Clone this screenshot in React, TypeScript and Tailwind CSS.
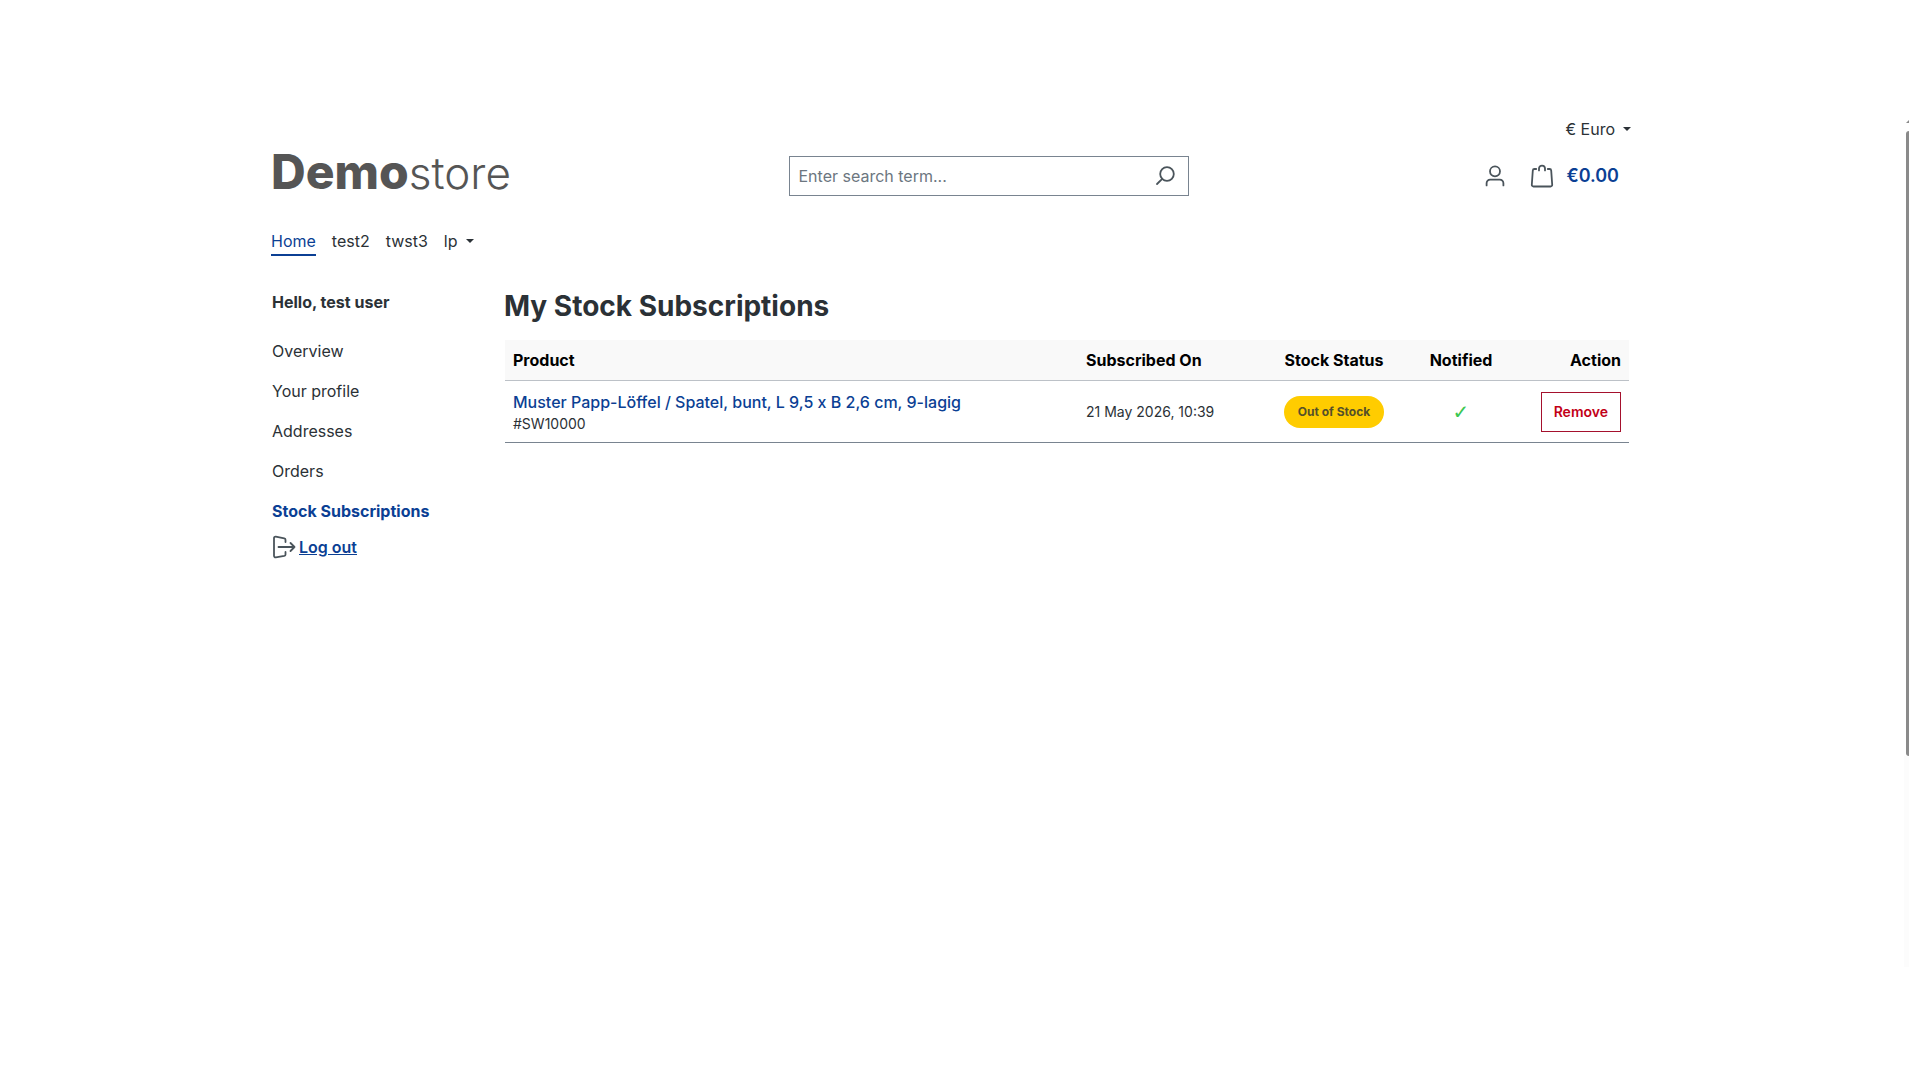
import React from "react";

const accountLinks = ["Overview", "Your profile", "Addresses", "Orders"];

function Caret() {
  return <span aria-hidden="true" className="inline-block border-x-4 border-t-4 border-x-transparent border-t-[#2b3136]" />;
}

function SearchIcon() {
  return (
    <svg width="22" height="22" viewBox="0 0 22 22" fill="none" stroke="#4a545b" strokeWidth="1.8" strokeLinecap="round" aria-hidden="true">
      <circle cx="13" cy="9" r="6.8" />
      <path d="M8.2 13.8 3 19" />
    </svg>
  );
}

function UserIcon() {
  return (
    <svg width="22" height="22" viewBox="0 0 22 22" fill="none" stroke="#4a545b" strokeWidth="1.8" strokeLinecap="round" aria-hidden="true">
      <circle cx="11" cy="6.3" r="5" />
      <path d="M2.6 20.4v-2.2a3.6 3.6 0 0 1 3.6-3.6h9.600a3.600 3.600 0 0 1 3.600 3.600v2.200" />
    </svg>
  );
}

function BagIcon() {
  return (
    <svg width="24" height="24" viewBox="0 0 24 24" fill="none" stroke="#4a545b" strokeWidth="1.8" strokeLinecap="round" strokeLinejoin="round" aria-hidden="true">
      <path d="M6.200 5H4.400a1.600 1.600 0 0 0-1.600 1.500L1.800 20.800a1.600 1.600 0 0 0 1.600 1.700h17.200a1.600 1.600 0 0 0 1.600-1.700L21.200 6.500A1.600 1.600 0 0 0 19.600 5h-1.800" />
      <path d="M9 6.400V4.600a3 3 0 0 1 6 0v1.800" />
    </svg>
  );
}

function LogoutIcon() {
  return (
    <svg width="24" height="24" viewBox="0 0 24 24" fill="none" stroke="#4a545b" strokeWidth="1.8" strokeLinecap="round" strokeLinejoin="round" aria-hidden="true">
      <path d="M13.500 7V4.800a1.500 1.500 0 0 0-1.200-1.500L3.800 1.700A1.500 1.500 0 0 0 2 3.200v17.600a1.500 1.500 0 0 0 1.800 1.500l8.500-1.400a1.500 1.500 0 0 0 1.200-1.500V17" />
      <path d="M6.500 12h16M18.500 8l4 4-4 4" />
    </svg>
  );
}

function Header() {
  return (
    <header>
      <div className="flex h-6 items-center justify-end">
        <button type="button" className="flex items-center gap-2">
          € Euro <Caret />
        </button>
      </div>
      <div className="mt-[11px] flex h-12 items-center">
        <a href="#" className="flex flex-1 items-baseline pb-2 text-[#555555]">
          <span className="text-[48px] leading-[48px] font-extrabold">Demo</span>
          <span className="text-[44px] leading-[48px] font-light">store</span>
        </a>
        <form role="search" className="ml-[87px] flex h-10 w-[400px] items-center border border-[#798490] pr-3">
          <input
            type="search"
            aria-label="Enter search term"
            placeholder="Enter search term..."
            className="h-full min-w-0 flex-1 bg-transparent px-[9px] outline-none placeholder:text-[#6c7680]"
          />
          <button type="button" aria-label="Search">
            <SearchIcon />
          </button>
        </form>
        <div className="flex flex-1 items-center justify-end pr-3">
          <button type="button" aria-label="Your account">
            <UserIcon />
          </button>
          <a href="#" className="ml-6 flex items-center gap-3 text-lg font-semibold text-[#0b3f94]">
            <BagIcon />
            €0.00
          </a>
        </div>
      </div>
      <nav className="mt-[29px] flex gap-4">
        <a href="#" className="border-b-2 border-[#0b3f94] pb-px text-[#0b3f94]">Home</a>
        <a href="#">test2</a>
        <a href="#">twst3</a>
        <a href="#" className="flex h-6 items-center gap-[9px]">
          lp <Caret />
        </a>
      </nav>
    </header>
  );
}

function Sidebar() {
  return (
    <aside className="w-[233px] shrink-0 pl-px">
      <p className="mb-[17px] font-bold">Hello, test user</p>
      <nav>
        {accountLinks.map((label) => (
          <a key={label} href="#" className="block py-2">
            {label}
          </a>
        ))}
        <a href="#" className="block py-2 font-bold text-[#0b3f94]">
          Stock Subscriptions
        </a>
        <a href="#" className="mt-1 flex items-center gap-[3px] font-semibold text-[#0b3f94]">
          <LogoutIcon />
          <span className="underline">Log out</span>
        </a>
      </nav>
    </aside>
  );
}

function Subscriptions() {
  return (
    <main className="min-w-0 flex-1 pr-0.5">
      <h1 className="text-[28px] leading-8 font-bold">My Stock Subscriptions</h1>
      <table className="mt-[18px] ml-px w-[calc(100%-1px)] table-fixed border-separate border-spacing-0">
        <thead>
          <tr className="h-[41px] bg-[#f9f9f9] text-black *:border-b *:border-[#bcc1c7]">
            <th className="px-2 text-left font-bold">Product</th>
            <th className="w-[198px] px-2 text-left font-bold">Subscribed On</th>
            <th className="w-[116px] px-2 text-center font-bold">Stock Status</th>
            <th className="w-[138px] px-2 text-center font-bold">Notified</th>
            <th className="w-[99px] px-2 text-right font-bold">Action</th>
          </tr>
        </thead>
        <tbody>
          <tr className="h-[62px] *:border-b *:border-[#798490]">
            <td className="px-2">
              <a href="#" className="block leading-6 font-medium text-[#0b3f94]">
                Muster Papp-Löffel / Spatel, bunt, L 9,5 x B 2,6 cm, 9-lagig
              </a>
              <span className="block text-sm leading-5">#SW10000</span>
            </td>
            <td className="px-2 text-sm">21 May 2026, 10:39</td>
            <td className="text-center">
              <span className="inline-block h-8 rounded-full bg-[#ffcc00] px-3.5 text-xs leading-8 font-bold whitespace-nowrap text-[#55502a]">Out of Stock</span>
            </td>
            <td className="text-center font-['DejaVu_Sans',sans-serif] text-xl leading-6 text-[#3cc752]">✓</td>
            <td className="px-2 text-right">
              <button type="button" className="h-10 border border-[#a5112d] px-3 text-sm font-semibold text-[#c20017]">Remove</button>
            </td>
          </tr>
        </tbody>
      </table>
    </main>
  );
}

export default function App() {
  return (
    <div className="flex min-h-screen bg-white pr-[11px] font-['Inter',sans-serif] text-base leading-6 text-[#2b3136]">
      <div className="min-w-0 flex-1 pr-[7px]">
        <div className="mx-auto max-w-[1400px] px-5 pt-[117px]">
          <Header />
          <div className="mt-[34px] flex">
            <Sidebar />
            <Subscriptions />
          </div>
        </div>
      </div>
      <div aria-hidden="true" className="mt-[120px] -ml-[9px] flex h-[847px] w-[9px] flex-col items-end">
        <span className="block h-[3px] w-[3px] bg-[#8a8a8a] [clip-path:polygon(100%_0,100%_100%,0_100%)]" />
        <span className="mt-2 h-[625px] w-[3px] rounded-l-sm bg-[#8a8a8a]" />
        <span className="w-[5px] flex-1 bg-[#fcfcfc]" />
      </div>
    </div>
  );
}
